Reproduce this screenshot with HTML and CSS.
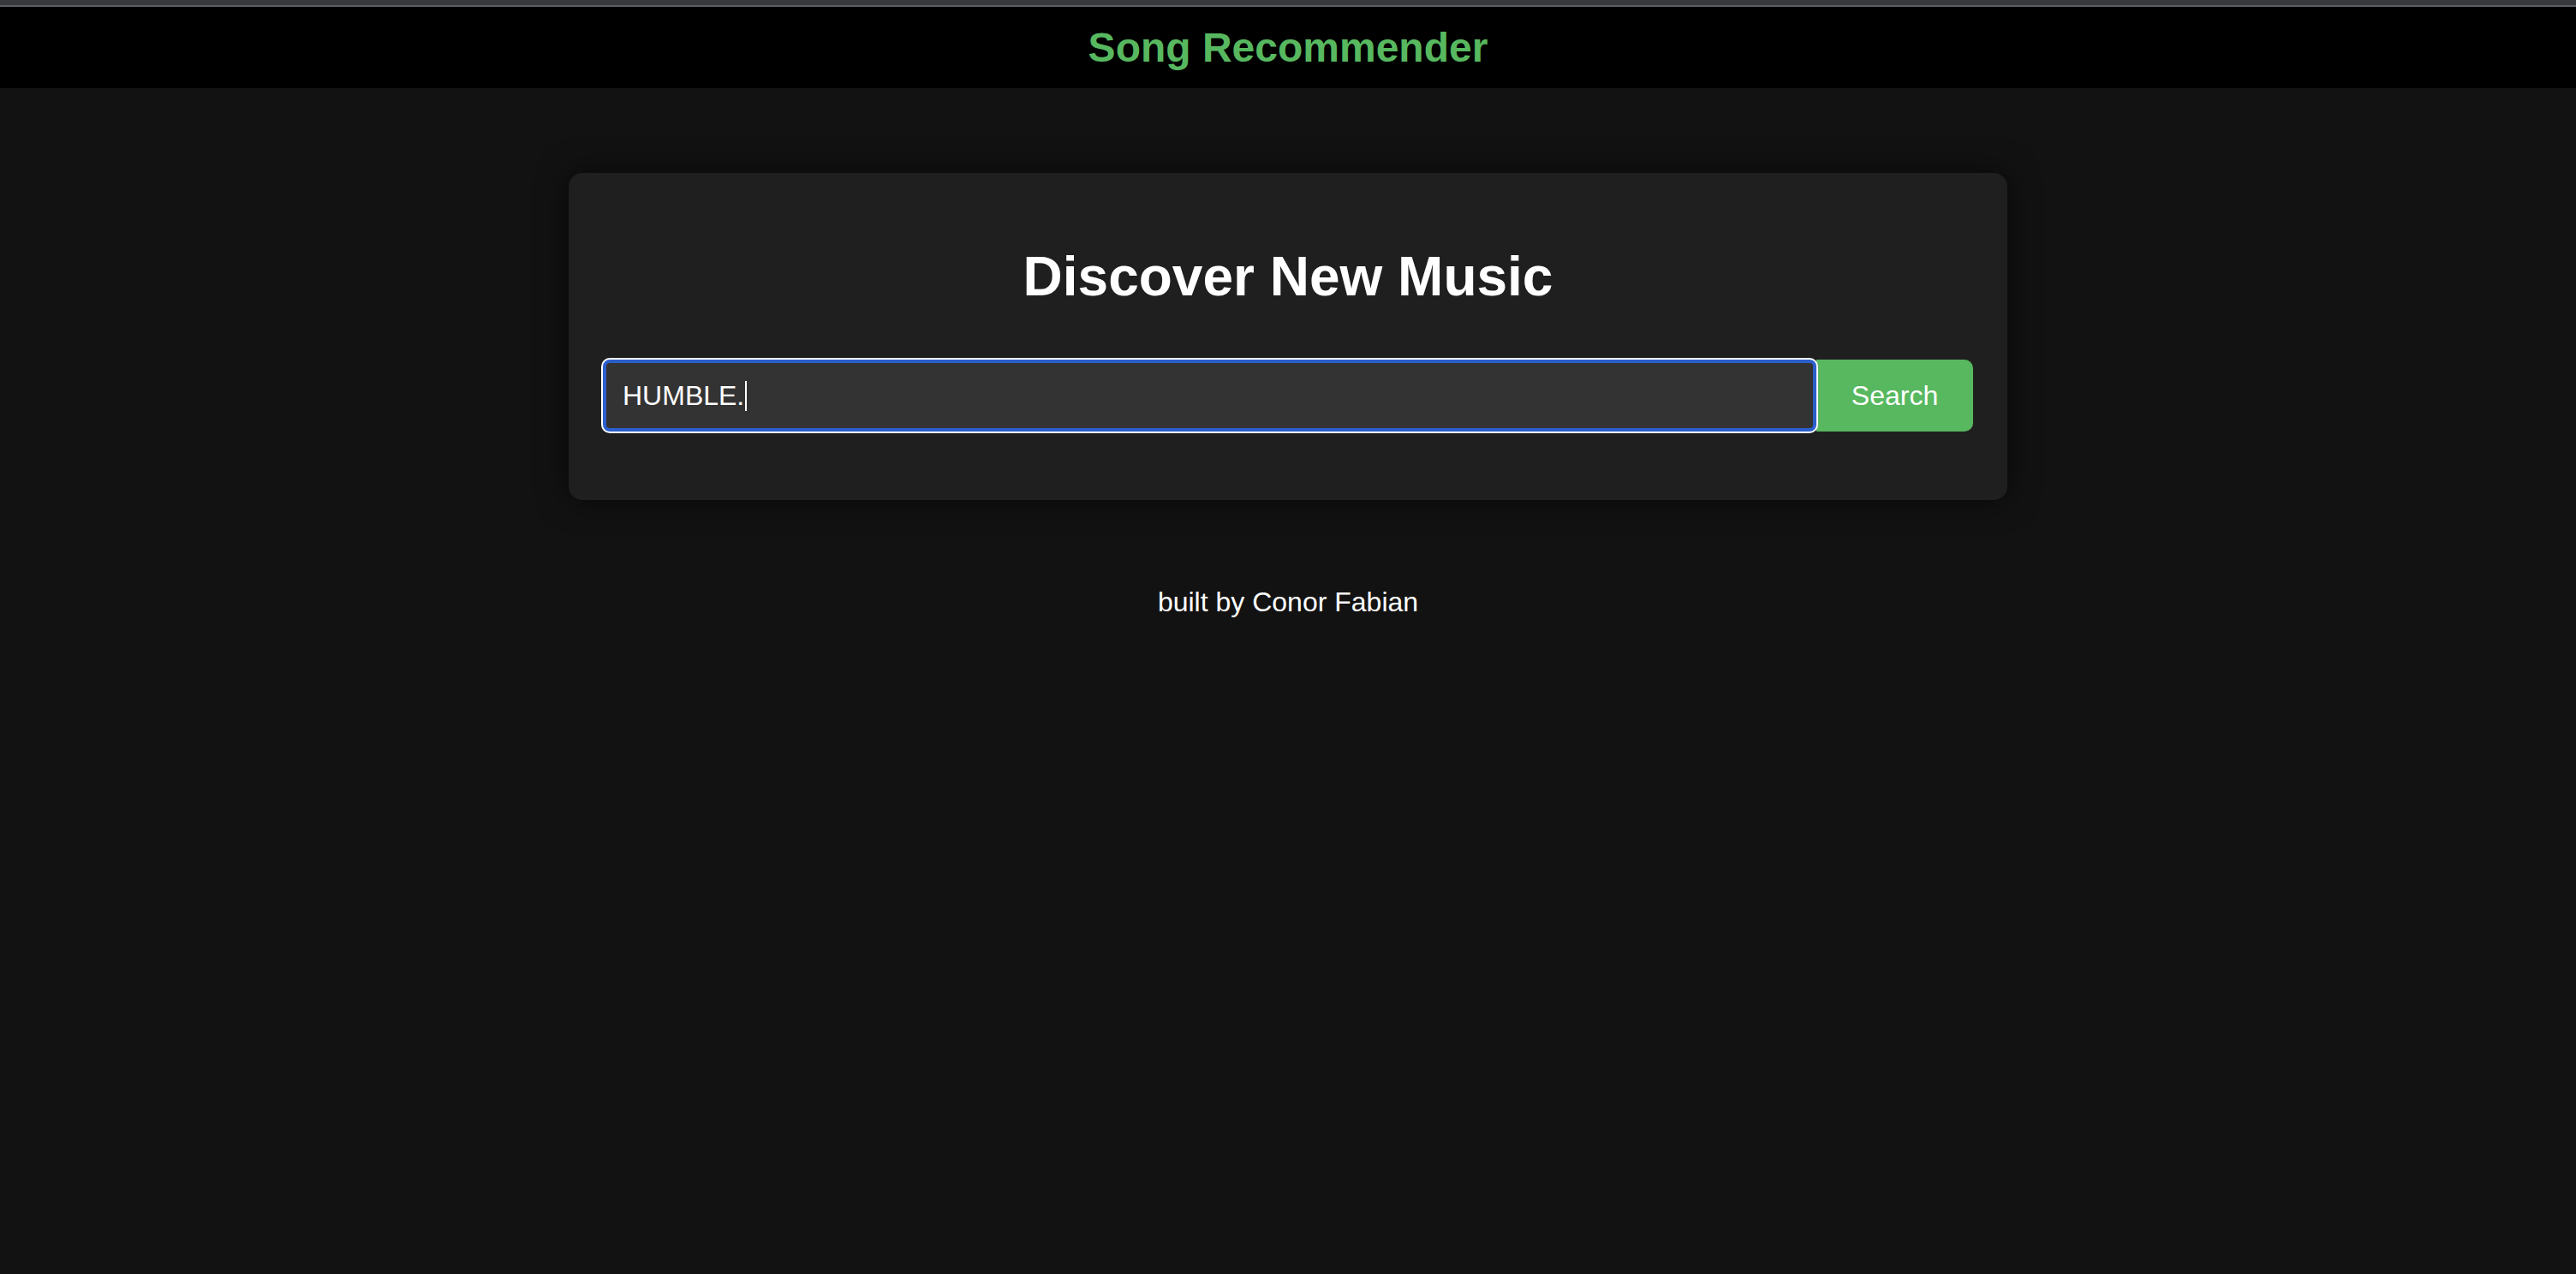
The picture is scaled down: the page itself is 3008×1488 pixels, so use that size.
FILE: index.html
```html
<!DOCTYPE html>
<html lang="en">
<head>
<meta charset="utf-8">
<title>Song Recommender</title>
<link rel="stylesheet" href="styles.css">
</head>
<body>
  <div class="topbar"></div>
  <header class="site-header">
    <h1 class="brand">Song Recommender</h1>
  </header>
  <main class="main">
    <section class="card">
      <h2 class="card-title">Discover New Music</h2>
      <form class="search-row">
        <div class="search-input" role="textbox">HUMBLE.<span class="caret"></span></div>
        <button class="search-btn" type="button">Search</button>
      </form>
    </section>
    <p class="credit">built by Conor Fabian</p>
  </main>
</body>
</html>
```

FILE: styles.css
```css
html, body {
  margin: 0;
  padding: 0;
}
body {
  background: #121212;
  color: #ffffff;
  font-family: "Liberation Sans", Arial, sans-serif;
  min-height: 1488px;
}
.topbar {
  height: 6px;
  background: #38393d;
  border-bottom: 2px solid #5f5f63;
}
.site-header {
  height: 95px;
  background: #000000;
  display: flex;
  align-items: center;
  justify-content: center;
}
.brand {
  margin: 0;
  font-size: 48px;
  font-weight: bold;
  color: #57b85f;
  line-height: 1;
}
.main {
  display: flex;
  flex-direction: column;
  align-items: center;
  padding-top: 99px;
}
.card {
  box-sizing: border-box;
  width: 1680px;
  padding: 40px;
  background: #1f1f1f;
  border-radius: 16px;
  box-shadow: 0 0 36px rgba(0, 0, 0, 0.6);
}
.card-title {
  margin: 44px 0 60px;
  font-size: 64px;
  line-height: 74px;
  font-weight: bold;
  text-align: center;
  color: #ffffff;
}
.search-row {
  display: flex;
  margin: 0 0 40px;
}
.search-input {
  flex: 1;
  box-sizing: border-box;
  height: 84px;
  display: flex;
  align-items: center;
  padding-left: 19px;
  background: #333333;
  border: 4px solid #2a5fcc;
  border-radius: 8px;
  box-shadow: 0 0 0 2px #ffffff;
  font-size: 32px;
  color: #ffffff;
  position: relative;
  z-index: 1;
}
.caret {
  display: inline-block;
  width: 2px;
  height: 35px;
  margin-left: 1px;
  background: #ffffff;
}
.search-btn {
  box-sizing: border-box;
  width: 183px;
  height: 84px;
  padding: 0;
  border: none;
  background: #57b85f;
  color: #ffffff;
  font-family: "Liberation Sans", Arial, sans-serif;
  font-size: 32px;
  border-radius: 0 10px 10px 0;
}
.credit {
  margin: 101px 0 0;
  font-size: 32px;
  color: #ffffff;
  text-align: center;
}
```
